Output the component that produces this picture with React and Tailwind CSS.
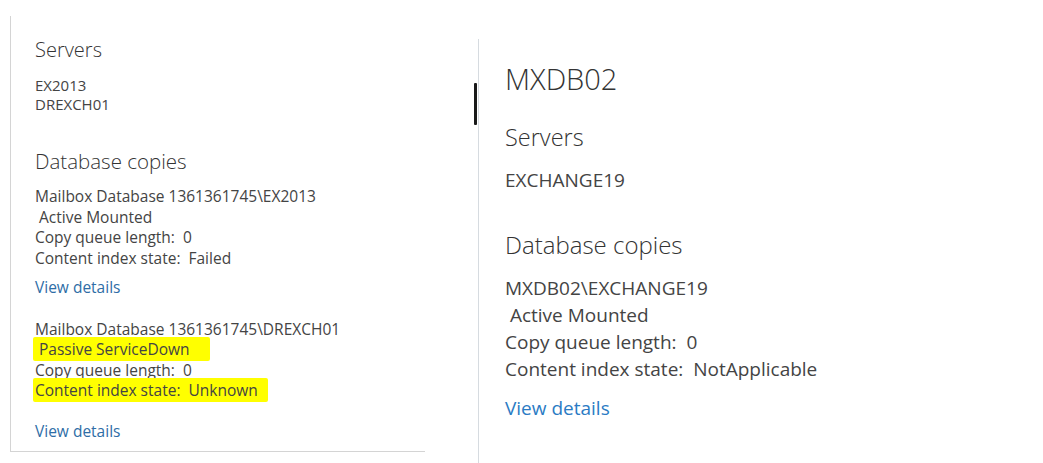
import React from 'react';

const FONT = { fontFamily: '"Open Sans", "Noto Sans", sans-serif' };

const leftCopies = [
  {
    name: 'Mailbox Database 1361361745\\EX2013',
    status: ' Active Mounted',
    queue: 'Copy queue length:  0',
    index: 'Content index state:  Failed',
  },
  {
    name: 'Mailbox Database 1361361745\\DREXCH01',
    status: ' Passive ServiceDown',
    queue: 'Copy queue length:  0',
    index: 'Content index state:  Unknown',
    flagged: true,
  },
];

function Hl({ children, className = '' }) {
  return (
    <span className={`bg-[#ffff00] -ml-[2px] pl-[2px] pr-[10px] py-[1px] rounded-[2px] ${className}`}>
      {children}
    </span>
  );
}

export default function App() {
  return (
    <div className="w-[1043px] h-[463px] bg-white overflow-hidden flex text-[#444]" style={FONT}>
      {/* Left panel */}
      <div className="mt-[16px] ml-[10px] w-[415px] h-[436px] shrink-0 border-l border-b border-[#d4d4d4] pl-[24px] pt-[20px]">
        <div className="text-[20px] leading-[28px] font-light text-[#333]">Servers</div>
        <div className="mt-[12px] text-[15px] leading-[19px]">
          <div>EX2013</div>
          <div>DREXCH01</div>
        </div>

        <div className="mt-[33px] text-[20.5px] leading-[28px] font-light text-[#333]">Database copies</div>

        {leftCopies.map((c, i) => (
          <div key={c.name} className={`${i === 0 ? 'mt-[11px]' : 'mt-[21px]'} text-[15.5px] leading-[20.5px] whitespace-pre`}>
            <div>{c.name}</div>
            <div>{c.flagged ? <Hl className="pr-[20px]">{c.status}</Hl> : c.status}</div>
            <div>{c.queue}</div>
            <div>{c.flagged ? <Hl>{c.index}</Hl> : c.index}</div>
            <div className={`${c.flagged ? 'mt-[20px]' : 'mt-[9px]'} text-[#2e6da6]`}>View details</div>
          </div>
        ))}
      </div>

      {/* scroll thumb */}
      <div className="w-[53px] shrink-0 flex justify-end">
        <div className="mt-[83px] mr-[1px] w-[3px] h-[42px] bg-[#1a1a1a] rounded-[1px]" />
      </div>

      {/* Right panel */}
      <div className="mt-[39px] flex-1 border-l border-[#d6dbe0] pl-[26px] pt-[20px]">
        <div className="text-[29px] leading-[40px] font-light text-[#333]">MXDB02</div>
        <div className="mt-[22px] text-[23.5px] leading-[32px] font-light text-[#333]">Servers</div>
        <div className="mt-[14px] text-[19px] leading-[27px]">EXCHANGE19</div>

        <div className="mt-[35px] text-[24px] leading-[32px] font-light text-[#333]">Database copies</div>
        <div className="mt-[14px] text-[19px] leading-[27px] whitespace-pre">
          <div>MXDB02\EXCHANGE19</div>
          <div> Active Mounted</div>
          <div>Copy queue length:  0</div>
          <div>Content index state:  NotApplicable</div>
          <div className="mt-[12px] text-[#2b7bc4]">View details</div>
        </div>
      </div>
    </div>
  );
}
